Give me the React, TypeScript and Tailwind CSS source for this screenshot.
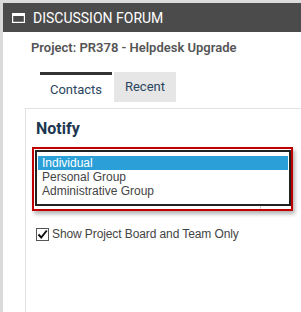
import { useState } from "react";

const options = ["Individual", "Personal Group", "Administrative Group"];

function WindowIcon() {
  return (
    <svg width="13" height="10" viewBox="0 0 13 10" fill="none">
      <rect x="0.6" y="0.6" width="11.8" height="8.8" stroke="white" strokeWidth="1.2" />
      <rect x="0.6" y="0.6" width="11.8" height="2.4" fill="white" />
    </svg>
  );
}

export default function App() {
  const [tab, setTab] = useState<"contacts" | "recent">("contacts");
  const [selected, setSelected] = useState(0);
  const [teamOnly, setTeamOnly] = useState(true);

  return (
    <div className="w-[301px] h-[312px] overflow-hidden bg-white flex flex-col font-['Roboto',sans-serif]">
      <div className="h-[3px] shrink-0 bg-[#dcdcdc]" />
      <div className="flex flex-1 min-h-0">
        <div className="w-[3px] shrink-0 bg-[#d9d9d9]" />
        <div className="flex-1 min-w-0 flex flex-col">
          <div className="h-[29px] shrink-0 bg-[#4b4b4b] flex items-center pl-[9px] gap-[8px]">
            <WindowIcon />
            <span className="text-white text-[14px] leading-none">DISCUSSION FORUM</span>
          </div>

          <div className="pl-[28px] pt-[6px] text-[13px] leading-[20px] font-semibold text-[#555]">
            Project: PR378 - Helpdesk Upgrade
          </div>

          <div className="flex gap-[2px] pl-[37px] mt-[14px] text-[13px] text-[#2b4560]">
            <button
              onClick={() => setTab("contacts")}
              className={`w-[72px] h-[30px] pt-[2px] border-t-[3px] ${
                tab === "contacts" ? "border-[#333] bg-white" : "border-transparent bg-[#e6e6e6]"
              }`}
            >
              Contacts
            </button>
            <button
              onClick={() => setTab("recent")}
              className={`w-[62px] h-[30px] ${
                tab === "recent" ? "border-t-[3px] border-[#333] bg-white" : "bg-[#e6e6e6]"
              }`}
            >
              Recent
            </button>
          </div>

          <div className="mt-[6px] ml-[22px] w-[300px] flex-1 border border-[#e2e2e2] border-r-0 border-b-0 pt-[9px]">
            <div className="pl-[10px] text-[16px] leading-[22px] font-bold text-[#1c3750]">Notify</div>

            <div className="mt-[7px] ml-[6px] w-[261px] h-[64px] border-2 border-[#c00000] shadow-[2px_3px_4px_rgba(0,0,0,0.3)] flex flex-col pt-px pl-px">
              <div className="w-[256px] h-[56px] border-2 border-[#222] bg-white px-[1px] pt-[4px] font-['Liberation_Sans',sans-serif] text-[12px]">
                {options.map((opt, i) => (
                  <div
                    key={opt}
                    onClick={() => setSelected(i)}
                    className={`h-[14px] leading-[14px] pl-[4px] cursor-default ${
                      selected === i ? "bg-[#2a9fd8] text-white" : "text-[#444]"
                    }`}
                  >
                    {opt}
                  </div>
                ))}
              </div>
              <div className="flex h-[3px]">
                <div className="w-[225px]" />
                <div className="w-px bg-[#cfcfcf]" />
              </div>
            </div>

            <label className="flex items-center gap-[3px] mt-[14px] pl-[10px] font-['Liberation_Sans',sans-serif] text-[12px] tracking-[-0.1px] text-[#444] cursor-default">
              <input
                type="checkbox"
                checked={teamOnly}
                onChange={(e) => setTeamOnly(e.target.checked)}
                className="sr-only"
              />
              <span className="w-[13px] h-[13px] border border-[#555] bg-white flex items-center justify-center">
                {teamOnly && (
                  <svg width="11" height="11" viewBox="0 0 11 11" fill="none">
                    <path d="M1.5 5.5 L4.2 8.5 L9.8 1.5" stroke="#111" strokeWidth="2" />
                  </svg>
                )}
              </span>
              Show Project Board and Team Only
            </label>
          </div>
        </div>
      </div>
    </div>
  );
}
